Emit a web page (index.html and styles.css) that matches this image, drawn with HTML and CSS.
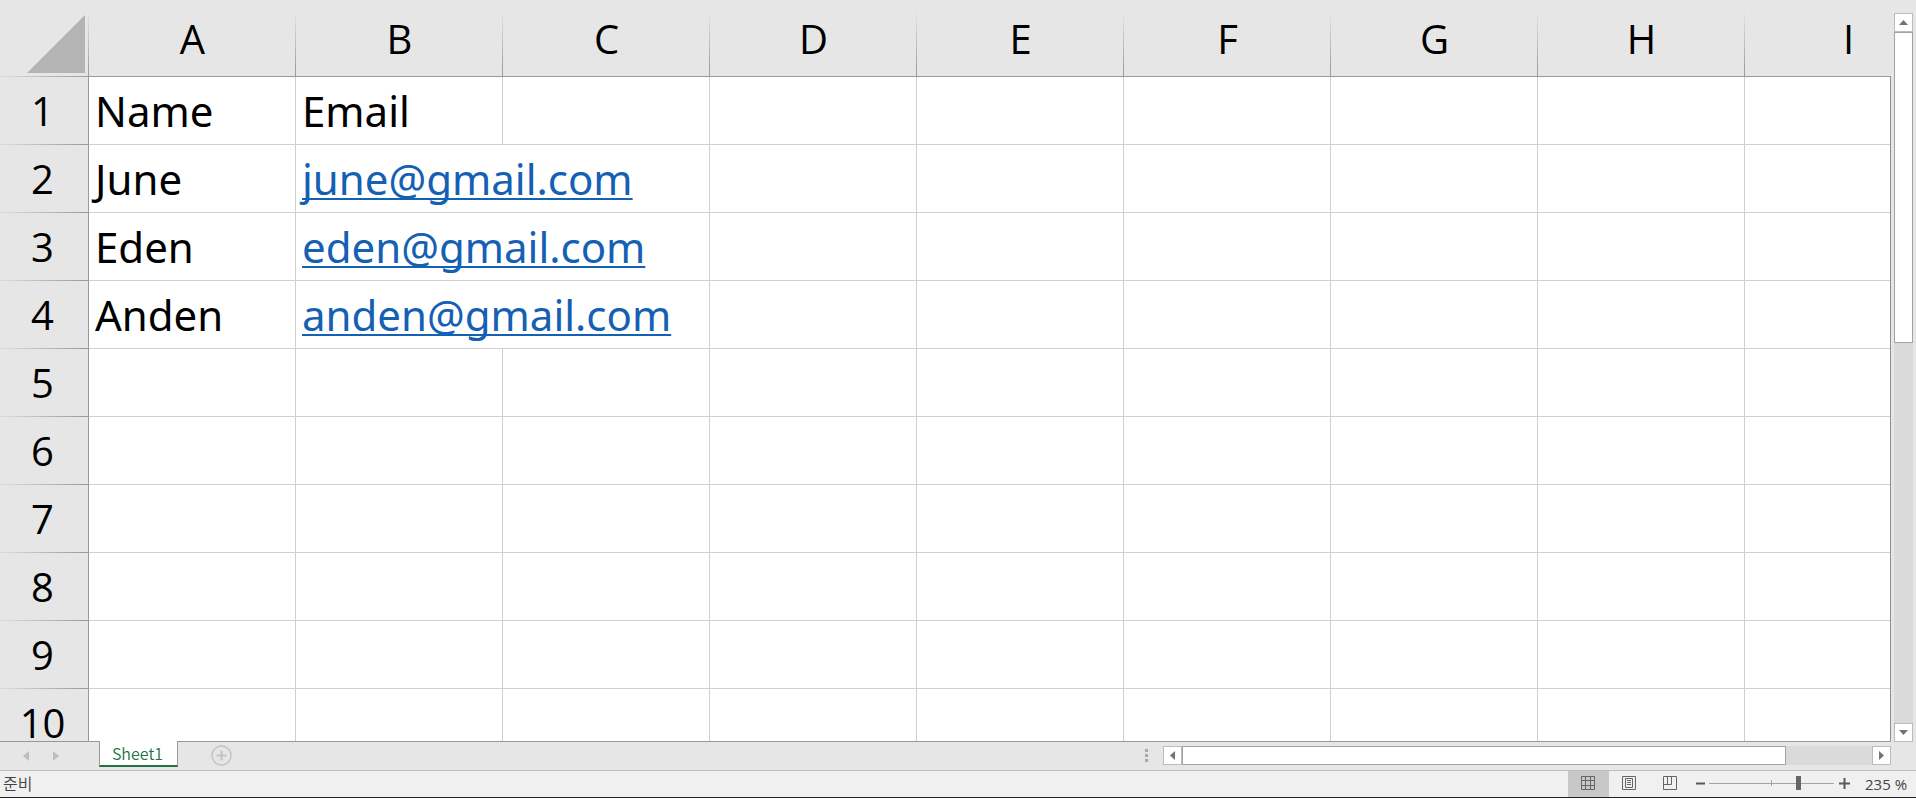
FILE: index.html
```html
<!DOCTYPE html>
<html lang="ko">
<head>
<meta charset="utf-8">
<title>Sheet1</title>
<link rel="stylesheet" href="styles.css">
</head>
<body>
<main class="workspace">
  <div class="grid">
    <table class="sheet">
      <colgroup><col class="col-head"><col><col><col><col><col><col><col><col><col></colgroup>
      <thead>
        <tr>
          <th class="corner"><button class="select-all" type="button" aria-label="Select all"><svg width="58" height="58" viewBox="0 0 58 58"><path d="M58 0V58H0Z" fill="#b4b4b4"/></svg></button></th>
          <th>A</th><th>B</th><th>C</th><th>D</th><th>E</th><th>F</th><th>G</th><th>H</th><th>I</th>
        </tr>
      </thead>
      <tbody>
        <tr><th>1</th><td>Name</td><td>Email</td><td></td><td></td><td></td><td></td><td></td><td></td><td></td></tr>
        <tr><th>2</th><td>June</td><td colspan="2"><a href="mailto:june@gmail.com">june@gmail.com</a></td><td></td><td></td><td></td><td></td><td></td><td></td></tr>
        <tr><th>3</th><td>Eden</td><td colspan="2"><a href="mailto:eden@gmail.com">eden@gmail.com</a></td><td></td><td></td><td></td><td></td><td></td><td></td></tr>
        <tr><th>4</th><td>Anden</td><td colspan="2"><a href="mailto:anden@gmail.com">anden@gmail.com</a></td><td></td><td></td><td></td><td></td><td></td><td></td></tr>
        <tr><th>5</th><td></td><td></td><td></td><td></td><td></td><td></td><td></td><td></td><td></td></tr>
        <tr><th>6</th><td></td><td></td><td></td><td></td><td></td><td></td><td></td><td></td><td></td></tr>
        <tr><th>7</th><td></td><td></td><td></td><td></td><td></td><td></td><td></td><td></td><td></td></tr>
        <tr><th>8</th><td></td><td></td><td></td><td></td><td></td><td></td><td></td><td></td><td></td></tr>
        <tr><th>9</th><td></td><td></td><td></td><td></td><td></td><td></td><td></td><td></td><td></td></tr>
        <tr><th>10</th><td></td><td></td><td></td><td></td><td></td><td></td><td></td><td></td><td></td></tr>
      </tbody>
    </table>
  </div>
  <div class="vscroll">
    <button class="scroll-btn" type="button" aria-label="Scroll up"><svg width="9" height="5" viewBox="0 0 9 5"><path d="M4.500 0L9 5H0Z"/></svg></button>
    <div class="track"><div class="thumb"></div></div>
    <button class="scroll-btn" type="button" aria-label="Scroll down"><svg width="9" height="5" viewBox="0 0 9 5"><path d="M0 0H9L4.500 5Z"/></svg></button>
  </div>
</main>

<nav class="tabbar">
  <div class="tab-nav">
    <button type="button" aria-label="Previous sheet"><svg width="6" height="10" viewBox="0 0 6 10"><path d="M6 0V10L0 5Z"/></svg></button>
    <button type="button" aria-label="Next sheet"><svg width="6" height="10" viewBox="0 0 6 10"><path d="M0 0V10L6 5Z"/></svg></button>
  </div>
  <button class="tab" type="button">Sheet1</button>
  <button class="add" type="button" aria-label="New sheet"><svg width="21" height="21" viewBox="0 0 21 21" fill="none" stroke="#c3c3c3"><circle cx="10.500" cy="10.500" r="9.500" stroke-width="1.500"/><path d="M10.500 5.500V15.500M5.500 10.500H15.500" stroke-width="2"/></svg></button>
  <svg class="grip" width="3" height="13" viewBox="0 0 3 13"><path d="M0 0H3V3H0ZM0 5H3V8H0ZM0 10H3V13H0Z" fill="#a9a9a9"/></svg>
  <div class="hscroll">
    <button class="scroll-btn" type="button" aria-label="Scroll left"><svg width="5" height="9" viewBox="0 0 5 9"><path d="M5 0V9L0 4.500Z"/></svg></button>
    <div class="track"><div class="thumb"></div></div>
    <button class="scroll-btn" type="button" aria-label="Scroll right"><svg width="5" height="9" viewBox="0 0 5 9"><path d="M0 0V9L5 4.500Z"/></svg></button>
  </div>
</nav>

<footer class="status">
  <span class="ready">준비</span>
  <div class="views">
    <button class="view active" type="button" aria-label="Normal view"><svg width="14" height="14" viewBox="0 0 14 14"><path d="M.5 .5H13.500V13.500H.5ZM4.500 .5V13.500M9.500 .5V13.500M.5 4.500H13.500M.5 9.500H13.500"/></svg></button>
    <button class="view" type="button" aria-label="Page layout"><svg width="14" height="14" viewBox="0 0 14 14"><path d="M.5 .5H13.500V13.500H.5ZM3.500 2.500H10.500V11.500H3.500ZM5 4.500H9M5 6.500H9M5 8.500H9"/></svg></button>
    <button class="view" type="button" aria-label="Page break preview"><svg width="14" height="14" viewBox="0 0 14 14"><path d="M.5 .5H13.500V13.500H.5ZM4.500 .5V8.500M.5 8.500H8.500V.5"/></svg></button>
  </div>
  <button class="zoom-btn" type="button" aria-label="Zoom out"><svg width="11" height="11" viewBox="0 0 11 11"><path d="M1 5.500H10" stroke-width="2"/></svg></button>
  <input class="zoom" type="range" min="0" max="1000" value="725" aria-label="Zoom">
  <button class="zoom-btn" type="button" aria-label="Zoom in"><svg width="11" height="11" viewBox="0 0 11 11"><path d="M0 5.500H11M5.500 0V11" stroke-width="2"/></svg></button>
  <button class="percent" type="button">235 %</button>
</footer>
</body>
</html>
```
FILE: styles.css
```css
* { box-sizing: border-box; }

body {
  margin: 0;
  height: 100vh;
  display: flex;
  flex-direction: column;
  overflow: hidden;
  background: #e6e6e6;
  color: #000;
  font-family: "Noto Sans CJK KR", sans-serif;
}

button {
  margin: 0;
  padding: 0;
  border: 0;
  background: none;
  font: inherit;
  color: inherit;
  display: flex;
  align-items: center;
  justify-content: center;
}

svg { display: block; flex: none; }

/* Grid */
.workspace { flex: 1; min-height: 0; display: flex; }

.grid {
  position: relative;
  flex: 1;
  min-width: 0;
  overflow: hidden;
  border-bottom: 1px solid #999;
}

.grid::after {
  content: "";
  position: absolute;
  top: 76px;
  right: 0;
  bottom: 0;
  width: 1px;
  background: #8f8f8f;
}

.sheet {
  table-layout: fixed;
  width: 1952px;
  border-collapse: separate;
  border-spacing: 0;
}

.sheet col { width: 207px; }
.sheet .col-head { width: 89px; }

.sheet th, .sheet td { padding: 0; line-height: 52px; white-space: nowrap; }

.sheet th {
  font-family: "Open Sans", sans-serif;
  font-size: 40px;
  font-weight: 400;
  text-align: center;
}

.sheet thead th {
  height: 77px;
  padding-top: 2px;
  border-bottom: 1px solid #999;
  background: linear-gradient(#e6e6e6, #999) right bottom / 1px 66px no-repeat;
}

.sheet thead .corner {
  border-bottom: 0;
  background:
    linear-gradient(#e6e6e6, #999) right bottom / 1px 66px no-repeat,
    linear-gradient(90deg, #dcdcdc, #999) left bottom / 100% 1px no-repeat;
}

.select-all { margin: 8px 0 0 27px; }

.sheet tbody th {
  height: 68px;
  padding: 0 3px 1px 0;
  border-right: 1px solid #999;
  background: linear-gradient(90deg, #dcdcdc, #999) left bottom / 100% 1px no-repeat;
}

.sheet td {
  padding-left: 6px;
  border-right: 1px solid #d0d0d0;
  border-bottom: 1px solid #d0d0d0;
  background: #fff;
  font-family: "Noto Sans", sans-serif;
  font-size: 42px;
}

.sheet td a {
  color: #1460b4;
  text-decoration: underline;
  text-decoration-thickness: 2px;
  text-underline-offset: 3px;
  text-decoration-skip-ink: none;
}

/* Scroll bars */
.vscroll {
  display: flex;
  flex-direction: column;
  width: 25px;
  padding: 13px 3px 0;
}

.hscroll { display: flex; width: 38%; height: 19px; margin-right: 25px; }

.scroll-btn {
  flex: none;
  width: 19px;
  height: 19px;
  border: 1px solid #bbb;
  background: #fff;
}

.scroll-btn path { fill: #737373; }

.track { flex: 1; background: #dadada; }
.thumb { border: 1px solid #a3a3a3; background: #fff; }
.vscroll .thumb { height: 45%; }
.hscroll .thumb { width: calc(100% * 7 / 8); height: 100%; }

/* Sheet tabs */
.tabbar {
  display: flex;
  align-items: center;
  height: 29px;
  padding-bottom: 1px;
  border-bottom: 1px solid #bebebe;
}

.tab-nav { display: flex; gap: 24px; width: 99px; padding-left: 23px; }
.tab-nav path { fill: #bebebe; }

.tab {
  position: relative;
  align-self: flex-start;
  width: 79px;
  height: 26px;
  margin-top: -1px;
  padding: 0 2px 1px 0;
  border: 1px solid #999;
  border-top: 0;
  border-bottom: 2px solid #217346;
  background: #fff;
  color: #217346;
  font-size: 16px;
  font-weight: 350;
}

.add { margin-left: 33px; }
.grip { margin: 0 15px 0 auto; }

/* Status bar */
.status {
  display: flex;
  align-items: center;
  height: 27px;
  padding-right: 9px;
  border-bottom: 1px solid #222;
  background: #f0f0f0;
  color: #444;
  font-size: 16px;
  line-height: 20px;
}

.ready { margin-right: auto; padding: 0 0 2px 3px; font-weight: 350; }

.views { display: flex; align-self: stretch; margin-right: 4px; }
.view { width: 41px; padding: 0 2px 2px 0; }
.view.active { background: #c8c8c8; }
.view path { fill: none; stroke: #666; }

.zoom-btn { padding-bottom: 2px; }
.zoom-btn path { stroke: #5a5a5a; }

.zoom {
  appearance: none;
  width: 125px;
  height: 14px;
  margin: 0 5px 2px 3px;
  background:
    linear-gradient(#a3a3a3, #a3a3a3) 62px center / 1px 6px no-repeat,
    linear-gradient(#a3a3a3, #a3a3a3) left center / 100% 1px no-repeat;
}

.zoom::-webkit-slider-thumb {
  appearance: none;
  width: 5px;
  height: 14px;
  background: #666;
}

.percent {
  width: 42px;
  margin-left: 15px;
  padding-bottom: 1px;
  justify-content: flex-start;
  font-family: "Open Sans", sans-serif;
  font-size: 15px;
  white-space: nowrap;
}
```
